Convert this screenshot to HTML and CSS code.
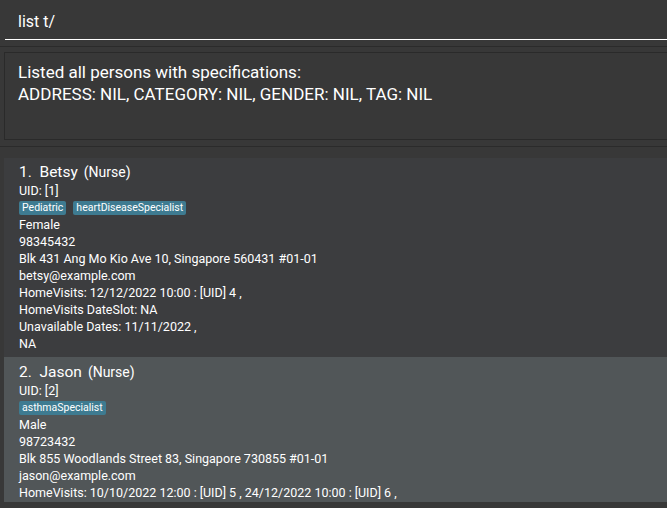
FILE: index.html
```html
<!DOCTYPE html>
<html>
<head>
<meta charset="utf-8">
<link rel="stylesheet" href="styles.css">
</head>
<body>
<div class="app">
  <div class="command">
    <div class="command-input">list t/</div>
  </div>
  <div class="sep"></div>
  <div class="result-wrap">
    <div class="result">
      <div>Listed all persons with specifications:</div>
      <div>ADDRESS: NIL, CATEGORY: NIL, GENDER: NIL, TAG: NIL</div>
    </div>
  </div>
  <div class="sep"></div>
  <div class="list">
    <div class="card">
      <div class="name-row"><span class="name">1.&nbsp; Betsy</span><span class="cat">(Nurse)</span></div>
      <div class="line">UID: [1]</div>
      <div class="tags"><span class="tag">Pediatric</span><span class="tag">heartDiseaseSpecialist</span></div>
      <div class="line">Female</div>
      <div class="line">98345432</div>
      <div class="line">Blk 431 Ang Mo Kio Ave 10, Singapore 560431 #01-01</div>
      <div class="line">betsy@example.com</div>
      <div class="line">HomeVisits: 12/12/2022 10:00 : [UID] 4 ,</div>
      <div class="line">HomeVisits DateSlot: NA</div>
      <div class="line">Unavailable Dates: 11/11/2022 ,</div>
      <div class="line">NA</div>
    </div>
    <div class="card selected">
      <div class="name-row"><span class="name">2.&nbsp; Jason</span><span class="cat">(Nurse)</span></div>
      <div class="line">UID: [2]</div>
      <div class="tags"><span class="tag">asthmaSpecialist</span></div>
      <div class="line">Male</div>
      <div class="line">98723432</div>
      <div class="line">Blk 855 Woodlands Street 83, Singapore 730855 #01-01</div>
      <div class="line">jason@example.com</div>
      <div class="line">HomeVisits: 10/10/2022 12:00 : [UID] 5 , 24/12/2022 10:00 : [UID] 6 ,</div>
    </div>
  </div>
</div>
</body>
</html>
```
FILE: styles.css
```css
html, body {
  margin: 0;
  padding: 0;
  background: #383838;
  height: 100%;
  overflow: hidden;
}
.app {
  font-family: "Roboto", "Liberation Sans", sans-serif;
  color: #ffffff;
  display: flex;
  flex-direction: column;
}
.command {
  padding: 0 0 0 5px;
  height: 46px;
}
.command-input {
  height: 40px;
  box-sizing: border-box;
  border-bottom: 1px solid #ffffff;
  padding: 12px 0 0 13px;
  font-size: 16px;
  line-height: 20px;
}
.sep {
  height: 1px;
  background: #2b2b2b;
}
.result-wrap {
  padding: 5px 0 6px 4px;
}
.result {
  height: 88px;
  box-sizing: border-box;
  border: 1px solid #2a2a2a;
  border-right: none;
  padding: 8px 0 0 13px;
  font-size: 17px;
  line-height: 22px;
}
.list {
  padding: 11px 0 0 4px;
}
.card {
  background: #3c3d3f;
  padding: 4px 0 5px 15px;
  font-size: 12.5px;
  line-height: 17px;
}
.card.selected {
  background: #515658;
  padding-top: 5px;
  padding-bottom: 1px;
}
.name-row {
  display: flex;
  align-items: baseline;
  gap: 6px;
  line-height: 20px;
}
.name {
  font-size: 15.5px;
}
.cat {
  font-size: 14px;
}
.line {
  white-space: nowrap;
}
.tags {
  display: flex;
  gap: 7px;
  padding: 2px 0 1px;
}
.tag {
  background: #3e7b91;
  border-radius: 2px;
  font-size: 10.5px;
  line-height: 14px;
  padding: 0 3px;
}
```
